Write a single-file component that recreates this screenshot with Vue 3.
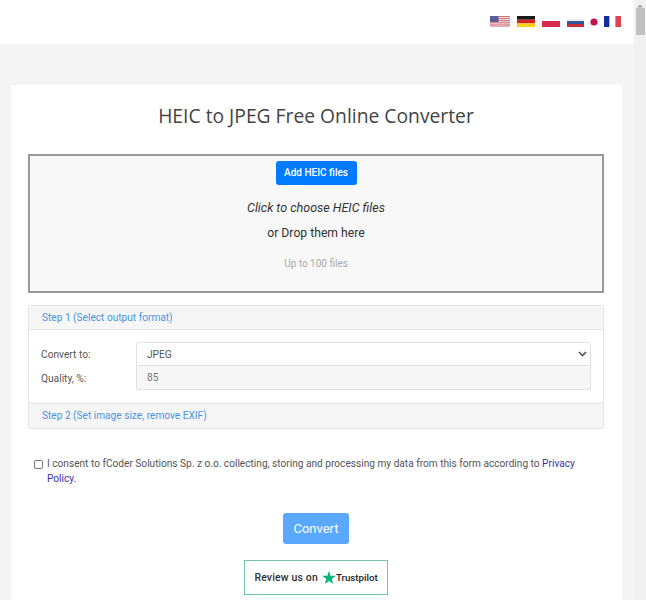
<script setup>
const stripes = [0, 1, 2, 3, 4, 5]
</script>

<template>
  <div class="page">
    <div class="main">
      <header class="top">
        <svg class="flag us" width="20" height="11" viewBox="0 0 20 11">
          <rect width="20" height="11" fill="#f4e4e4" />
          <rect v-for="s in stripes" :key="s" :y="s * 1.9" width="20" height="1" fill="#d0737b" />
          <rect width="8.5" height="6" fill="#5a5f98" />
        </svg>
        <svg class="flag de" width="18" height="11" viewBox="0 0 18 11">
          <rect width="18" height="3.7" fill="#1a1a1a" />
          <rect y="3.7" width="18" height="3.7" fill="#d3202a" />
          <rect y="7.4" width="18" height="3.6" fill="#fbd116" />
        </svg>
        <svg class="flag pl" width="18" height="11" viewBox="0 0 18 11">
          <rect width="18" height="5" fill="#ffffff" />
          <rect y="5" width="18" height="6" fill="#d62b4d" />
        </svg>
        <svg class="flag ru" width="17" height="8" viewBox="0 0 17 8">
          <rect width="17" height="2" fill="#eeeeee" />
          <rect y="2" width="17" height="3" fill="#35549e" />
          <rect y="5" width="17" height="3" fill="#c5303c" />
        </svg>
        <svg class="flag jp" width="8" height="8" viewBox="0 0 8 8">
          <circle cx="4" cy="4" r="3.6" fill="#c4124a" />
        </svg>
        <svg class="flag fr" width="17" height="11" viewBox="0 0 17 11">
          <rect width="5.6" height="11" fill="#0f2f9e" />
          <rect x="5.6" width="5.8" height="11" fill="#ffffff" />
          <rect x="11.4" width="5.6" height="11" fill="#e0414e" />
        </svg>
      </header>

      <main class="card">
        <h1 class="title">HEIC to JPEG Free Online Converter</h1>

        <section class="drop">
          <button class="add" type="button">Add HEIC files</button>
          <p class="click">Click to choose HEIC files</p>
          <p class="or">or Drop them here</p>
          <p class="limit">Up to 100 files</p>
        </section>

        <section class="accordion">
          <div class="acc-head"><a class="step">Step 1 (Select output format)</a></div>
          <div class="acc-body">
            <div class="row">
              <label class="lab">Convert to:</label>
              <div class="ctl select">
                <span>JPEG</span>
                <svg width="9" height="6" viewBox="0 0 9 6"><path d="M1 1l3.5 3.5L8 1" fill="none" stroke="#555" stroke-width="1.6" /></svg>
              </div>
            </div>
            <div class="row">
              <label class="lab">Quality, %:</label>
              <div class="ctl readonly">85</div>
            </div>
          </div>
          <div class="acc-head last"><a class="step">Step 2 (Set image size, remove EXIF)</a></div>
        </section>

        <div class="consent">
          <span class="check"></span>
          <p>I consent to fCoder Solutions Sp. z o.o. collecting, storing and processing my data from this form according to <a class="privacy">Privacy Policy.</a></p>
        </div>

        <div class="actions">
          <button class="convert" type="button">Convert</button>
          <div class="trust">
            <span class="review">Review us on</span>
            <svg width="14" height="13" viewBox="0 0 24 23"><path d="M12 0l2.9 8.6H24l-7.3 5.4 2.8 8.9L12 17.5l-7.5 5.4 2.8-8.9L0 8.6h9.1z" fill="#00b67a" /></svg>
            <span class="brand">Trustpilot</span>
          </div>
        </div>
      </main>
    </div>

    <aside class="scrollbar">
      <svg width="12" height="12" viewBox="0 0 12 12"><path d="M3 7.5L6 4.5l3 3z" fill="#9d9d9d" /></svg>
      <div class="thumb"></div>
    </aside>
  </div>
</template>

<style>
html, body { margin: 0; height: 100%; overflow: hidden; }
</style>

<style scoped>
.page {
  display: flex;
  width: 646px;
  height: 600px;
  overflow: hidden;
  font-family: Roboto, "Liberation Sans", sans-serif;
  color: #333;
  background: #f5f5f5;
}
.main { width: 634px; flex: none; }
.scrollbar { width: 12px; flex: none; background: #f1f1f1; }
.scrollbar svg { display: block; }
.thumb { height: 27px; margin: -4px 1px 0 2px; background: #c1c1c1; }

.top {
  height: 44px;
  background: #fff;
  display: flex;
  align-items: flex-start;
  padding: 16px 13px 0 0;
  box-sizing: border-box;
  justify-content: flex-end;
}
.flag { display: block; flex: none; }
.us { margin-right: 7px; }
.de { margin-right: 7px; }
.pl { margin-right: 7px; }
.ru { margin-top: 3px; margin-right: 6px; }
.jp { margin-top: 2px; margin-right: 6px; }

.card {
  margin: 41px 12px 0 11px;
  height: 515px;
  padding: 0 18px 0 17px;
  background: #fff;
  overflow: hidden;
}
.title {
  margin: 17px 0 25px;
  font-family: "Open Sans", Roboto, sans-serif;
  font-size: 19.3px;
  font-weight: 400;
  line-height: 27px;
  text-align: center;
  color: #444;
}
.drop {
  height: 139px;
  box-sizing: border-box;
  border: 2px solid #999;
  background: #f8f8f8;
  padding-top: 5px;
  text-align: center;
}
.add {
  display: block;
  margin: 0 auto;
  width: 81px;
  height: 24px;
  padding: 0 0 1px;
  border: 0;
  border-radius: 3px;
  background: #007bff;
  color: #fff;
  font: 500 10px Roboto, sans-serif;
}
.drop p { margin: 0; }
.click { margin-top: 15px !important; font-size: 12.5px; font-style: italic; line-height: 16px; color: #333; }
.or { margin-top: 9px !important; font-size: 12.2px; line-height: 16px; color: #333; }
.limit { margin-top: 15px !important; font-size: 10px; line-height: 16px; color: #aaa; }

.accordion {
  margin-top: 12px;
  border: 1px solid #e4e4e4;
  border-radius: 3px;
  overflow: hidden;
}
.acc-head {
  height: 24px;
  box-sizing: border-box;
  padding-left: 13px;
  background: #f6f6f6;
  border-bottom: 1px solid #e4e4e4;
  font-size: 10.15px;
  line-height: 23px;
}
.acc-head.last { height: 25px; border-bottom: 0; border-top: 1px solid #e4e4e4; line-height: 24px; }
.step { color: #4a94e4; }
.acc-body { padding: 12px 12px 13px; }
.row { display: flex; align-items: stretch; height: 24px; }
.lab { width: 95px; flex: none; font-size: 10.2px; line-height: 25px; color: #555; }
.ctl {
  flex: 1;
  box-sizing: border-box;
  border: 1px solid #e2e2e2;
  font-size: 10.2px;
  line-height: 23px;
  color: #555;
  padding-left: 10px;
}
.select {
  display: flex;
  align-items: center;
  justify-content: space-between;
  padding-right: 3px;
  background: #fff;
  border-radius: 3px 3px 0 0;
}
.readonly { background: #f7f7f7; border-top: 0; color: #777; border-radius: 0 0 3px 3px; }

.consent { display: flex; margin-top: 27px; padding-left: 6px; }
.check {
  flex: none;
  width: 9px;
  height: 9px;
  margin-top: 4px;
  margin-right: 4px;
  border: 1px solid #767676;
  border-radius: 2px;
  box-sizing: border-box;
  background: #fff;
}
.consent p {
  margin: 0;
  width: 530px;
  font-size: 10.15px;
  line-height: 15px;
  color: #555;
}
.privacy { color: #3a2fa8; }

.actions { display: flex; flex-direction: column; align-items: center; margin-top: 27px; }
.convert {
  width: 66px;
  height: 31px;
  padding: 0;
  border: 0;
  border-radius: 3px;
  background: #5aa8ff;
  color: #fff;
  font: 400 13px Roboto, sans-serif;
}
.trust {
  display: flex;
  align-items: center;
  justify-content: center;
  width: 144px;
  height: 35px;
  margin-top: 16px;
  box-sizing: border-box;
  border: 1px solid #73c4ab;
  background: #fff;
}
.review { font-size: 10.5px; font-weight: 500; color: #333; letter-spacing: 0.15px; margin-right: 4px; }
.brand { font-size: 9.7px; font-weight: 500; color: #222; }
</style>
